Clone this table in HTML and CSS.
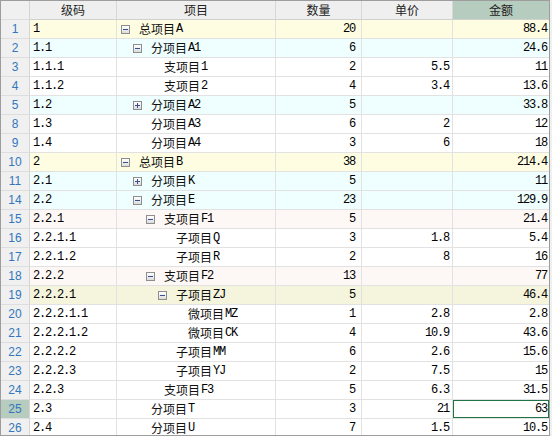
FILE: index.html
```html
<!DOCTYPE html>
<html>
<head>
<meta charset="utf-8">
<link rel="stylesheet" href="styles.css">
</head>
<body>
<div class="grid">
  <div class="row head">
    <div class="c0"></div>
    <div class="c1">级码</div>
    <div class="c2">项目</div>
    <div class="c3">数量</div>
    <div class="c4">单价</div>
    <div class="c5 active">金额</div>
  </div>

  <div class="row yellow">
    <div class="c0">1</div><div class="c1 m">1</div>
    <div class="c2 l1"><span class="tg minus"></span>总项目<span class="m">A</span></div>
    <div class="c3 m">20</div><div class="c4 m"></div><div class="c5 m">88.4</div>
  </div>
  <div class="row cyan">
    <div class="c0">2</div><div class="c1 m">1.1</div>
    <div class="c2 l2"><span class="tg minus"></span>分项目<span class="m">A1</span></div>
    <div class="c3 m">6</div><div class="c4 m"></div><div class="c5 m">24.6</div>
  </div>
  <div class="row">
    <div class="c0">3</div><div class="c1 m">1.1.1</div>
    <div class="c2 l3"><span class="tg"></span>支项目<span class="m">1</span></div>
    <div class="c3 m">2</div><div class="c4 m">5.5</div><div class="c5 m">11</div>
  </div>
  <div class="row">
    <div class="c0">4</div><div class="c1 m">1.1.2</div>
    <div class="c2 l3"><span class="tg"></span>支项目<span class="m">2</span></div>
    <div class="c3 m">4</div><div class="c4 m">3.4</div><div class="c5 m">13.6</div>
  </div>
  <div class="row cyan">
    <div class="c0">5</div><div class="c1 m">1.2</div>
    <div class="c2 l2"><span class="tg plus"></span>分项目<span class="m">A2</span></div>
    <div class="c3 m">5</div><div class="c4 m"></div><div class="c5 m">33.8</div>
  </div>
  <div class="row">
    <div class="c0">8</div><div class="c1 m">1.3</div>
    <div class="c2 l2"><span class="tg"></span>分项目<span class="m">A3</span></div>
    <div class="c3 m">6</div><div class="c4 m">2</div><div class="c5 m">12</div>
  </div>
  <div class="row">
    <div class="c0">9</div><div class="c1 m">1.4</div>
    <div class="c2 l2"><span class="tg"></span>分项目<span class="m">A4</span></div>
    <div class="c3 m">3</div><div class="c4 m">6</div><div class="c5 m">18</div>
  </div>
  <div class="row yellow">
    <div class="c0">10</div><div class="c1 m">2</div>
    <div class="c2 l1"><span class="tg minus"></span>总项目<span class="m">B</span></div>
    <div class="c3 m">38</div><div class="c4 m"></div><div class="c5 m">214.4</div>
  </div>
  <div class="row cyan">
    <div class="c0">11</div><div class="c1 m">2.1</div>
    <div class="c2 l2"><span class="tg plus"></span>分项目<span class="m">K</span></div>
    <div class="c3 m">5</div><div class="c4 m"></div><div class="c5 m">11</div>
  </div>
  <div class="row cyan">
    <div class="c0">14</div><div class="c1 m">2.2</div>
    <div class="c2 l2"><span class="tg minus"></span>分项目<span class="m">E</span></div>
    <div class="c3 m">23</div><div class="c4 m"></div><div class="c5 m">129.9</div>
  </div>
  <div class="row pink">
    <div class="c0">15</div><div class="c1 m">2.2.1</div>
    <div class="c2 l3"><span class="tg minus"></span>支项目<span class="m">F1</span></div>
    <div class="c3 m">5</div><div class="c4 m"></div><div class="c5 m">21.4</div>
  </div>
  <div class="row">
    <div class="c0">16</div><div class="c1 m">2.2.1.1</div>
    <div class="c2 l4"><span class="tg"></span>子项目<span class="m">Q</span></div>
    <div class="c3 m">3</div><div class="c4 m">1.8</div><div class="c5 m">5.4</div>
  </div>
  <div class="row">
    <div class="c0">17</div><div class="c1 m">2.2.1.2</div>
    <div class="c2 l4"><span class="tg"></span>子项目<span class="m">R</span></div>
    <div class="c3 m">2</div><div class="c4 m">8</div><div class="c5 m">16</div>
  </div>
  <div class="row pink">
    <div class="c0">18</div><div class="c1 m">2.2.2</div>
    <div class="c2 l3"><span class="tg minus"></span>支项目<span class="m">F2</span></div>
    <div class="c3 m">13</div><div class="c4 m"></div><div class="c5 m">77</div>
  </div>
  <div class="row olive">
    <div class="c0">19</div><div class="c1 m">2.2.2.1</div>
    <div class="c2 l4"><span class="tg minus"></span>子项目<span class="m">ZJ</span></div>
    <div class="c3 m">5</div><div class="c4 m"></div><div class="c5 m">46.4</div>
  </div>
  <div class="row">
    <div class="c0">20</div><div class="c1 m">2.2.2.1.1</div>
    <div class="c2 l5"><span class="tg"></span>微项目<span class="m">MZ</span></div>
    <div class="c3 m">1</div><div class="c4 m">2.8</div><div class="c5 m">2.8</div>
  </div>
  <div class="row">
    <div class="c0">21</div><div class="c1 m">2.2.2.1.2</div>
    <div class="c2 l5"><span class="tg"></span>微项目<span class="m">CK</span></div>
    <div class="c3 m">4</div><div class="c4 m">10.9</div><div class="c5 m">43.6</div>
  </div>
  <div class="row">
    <div class="c0">22</div><div class="c1 m">2.2.2.2</div>
    <div class="c2 l4"><span class="tg"></span>子项目<span class="m">MM</span></div>
    <div class="c3 m">6</div><div class="c4 m">2.6</div><div class="c5 m">15.6</div>
  </div>
  <div class="row">
    <div class="c0">23</div><div class="c1 m">2.2.2.3</div>
    <div class="c2 l4"><span class="tg"></span>子项目<span class="m">YJ</span></div>
    <div class="c3 m">2</div><div class="c4 m">7.5</div><div class="c5 m">15</div>
  </div>
  <div class="row">
    <div class="c0">24</div><div class="c1 m">2.2.3</div>
    <div class="c2 l3"><span class="tg"></span>支项目<span class="m">F3</span></div>
    <div class="c3 m">5</div><div class="c4 m">6.3</div><div class="c5 m">31.5</div>
  </div>
  <div class="row">
    <div class="c0 active">25</div><div class="c1 m">2.3</div>
    <div class="c2 l2"><span class="tg"></span>分项目<span class="m">T</span></div>
    <div class="c3 m">3</div><div class="c4 m">21</div><div class="c5 m sel">63</div>
  </div>
  <div class="row">
    <div class="c0">26</div><div class="c1 m">2.4</div>
    <div class="c2 l2"><span class="tg"></span>分项目<span class="m">U</span></div>
    <div class="c3 m">7</div><div class="c4 m">1.5</div><div class="c5 m">10.5</div>
  </div>
</div>
</body>
</html>
```

FILE: styles.css
```css
html, body {
  margin: 0;
  padding: 0;
  background: #f0f0f0;
}
body {
  width: 552px;
  height: 436px;
  overflow: hidden;
  font-family: "Noto Sans CJK SC", sans-serif;
  font-size: 12px;
  color: #111;
}
.grid {
  box-sizing: border-box;
  width: 550px;
  height: 436px;
  border: 1px solid #9d9d9d;
  background: #fff;
  overflow: hidden;
}
.row {
  display: flex;
  height: 19px;
}
.row > div {
  box-sizing: border-box;
  height: 19px;
  line-height: 18px;
  border-right: 1px solid #e2e2e2;
  border-bottom: 1px solid #e2e2e2;
  white-space: nowrap;
  overflow: hidden;
}
.c0 { width: 29px; flex: none; }
.c1 { width: 87px; flex: none; padding-left: 3px; }
.c2 { width: 159px; flex: none; display: flex; align-items: center; }
.c3 { width: 86px; flex: none; text-align: right; padding-right: 6px; }
.c4 { width: 91px; flex: none; text-align: right; padding-right: 3px; }
.c5 { width: 96px; flex: none; text-align: right; padding-right: 2px; }
.row > .c5 { border-right: none; }

.row > .c0 {
  background: #f0f0f0;
  color: #3277bd;
  text-align: center;
  font-family: "Liberation Sans", sans-serif;
  font-size: 12px;
  border-right-color: #d4d4d4;
  border-bottom-color: #dedede;
}
.row > .c0.active { background: #b6ccbe; }

.head > div {
  background: #efefef;
  text-align: center;
  color: #222;
  padding: 0;
  border-right-color: #d8d8d8;
  border-bottom-color: #d0d0d0;
}
.head > .c2 { display: block; }
.head > .active { background: #b6ccbe; }

.m {
  font-family: "Liberation Mono", monospace;
  font-size: 12px;
  letter-spacing: -1.2px;
  color: #000;
}
.c2 .m { margin-left: 1px; }

.yellow > div:not(.c0) { background: #fefde2; }
.cyan > div:not(.c0) { background: #effefe; }
.pink > div:not(.c0) { background: #fdf8f6; }
.olive > div:not(.c0) { background: #f5f5dd; }

.l1 { padding-left: 4px; }
.l2 { padding-left: 16px; }
.l3 { padding-left: 29px; }
.l4 { padding-left: 41px; }
.l5 { padding-left: 53px; }

.tg {
  box-sizing: border-box;
  flex: none;
  width: 9px;
  height: 9px;
  margin-right: 9px;
  position: relative;
}
.tg.minus, .tg.plus {
  border: 1px solid #8e8e8e;
  background: linear-gradient(#ffffff, #dcdcdc);
}
.tg.minus::before, .tg.plus::before {
  content: "";
  position: absolute;
  left: 1px;
  top: 3px;
  width: 5px;
  height: 1px;
  background: #3b4f8f;
}
.tg.plus::after {
  content: "";
  position: absolute;
  left: 3px;
  top: 1px;
  width: 1px;
  height: 5px;
  background: #3b4f8f;
}
.row > .sel {
  box-shadow: inset 0 0 0 1px #217346;
}
```
